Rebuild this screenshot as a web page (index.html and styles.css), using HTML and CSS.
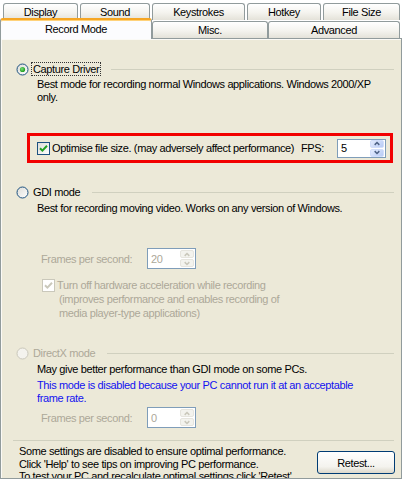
FILE: index.html
```html
<!DOCTYPE html>
<html>
<head>
<meta charset="utf-8">
<link rel="stylesheet" href="styles.css">
</head>
<body>
<svg class="defs" width="0" height="0">
  <defs>
    <linearGradient id="rg" x1="0" y1="0" x2="1" y2="1"><stop offset="0" stop-color="#DCDCD7"/><stop offset="1" stop-color="#FFFFFF"/></linearGradient>
    <radialGradient id="dot" cx="0.4" cy="0.4" r="0.6"><stop offset="0" stop-color="#7BE07B"/><stop offset="1" stop-color="#1C9A1C"/></radialGradient>
  </defs>
</svg>
<div class="win">
  <div class="tabrow row1">
    <div class="tab t-display">Display</div>
    <div class="tab t-sound">Sound</div>
    <div class="tab t-keys">Keystrokes</div>
    <div class="tab t-hotkey">Hotkey</div>
    <div class="tab t-fsize">File Size</div>
  </div>
  <div class="tabrow row2">
    <div class="tab sel t-record">Record Mode</div>
    <div class="tab t-misc">Misc.</div>
    <div class="tab t-adv">Advanced</div>
  </div>
  <div class="panel">
    <div class="ghead g1">
      <svg class="radio" width="13" height="13" viewBox="0 0 13 13"><circle cx="6.5" cy="6.5" r="5.5" fill="url(#rg)" stroke="#1C5180"/><circle cx="6.5" cy="6.5" r="2.6" fill="url(#dot)"/></svg>
      <span class="glabel focus">Capture Driver</span>
      <span class="gline"></span>
    </div>
    <div class="desc d1">Best mode for recording normal Windows applications. Windows 2000/XP<br>only.</div>

    <div class="redbox">
      <svg class="chk" width="13" height="13" viewBox="0 0 13 13"><rect x="0.5" y="0.5" width="12" height="12" fill="url(#rg)" stroke="#1C5180"/><path d="M3 6.2 L5.4 8.6 L10 3.8" fill="none" stroke="#21A121" stroke-width="2"/></svg>
      <span class="chklabel">Optimise file size. (may adversely affect performance)</span>
      <span class="fpslabel">FPS:</span>
      <div class="spin s-fps">
        <span class="val">5</span>
        <span class="btns">
          <span class="sb"><svg width="13" height="7" viewBox="0 0 13 7"><path d="M4 5 L6.5 2.5 L9 5" fill="none" stroke="#4D6185" stroke-width="1.6"/></svg></span>
          <span class="sb"><svg width="13" height="7" viewBox="0 0 13 7"><path d="M4 2 L6.5 4.5 L9 2" fill="none" stroke="#4D6185" stroke-width="1.6"/></svg></span>
        </span>
      </div>
    </div>

    <div class="ghead g2">
      <svg class="radio" width="13" height="13" viewBox="0 0 13 13"><circle cx="6.5" cy="6.5" r="5.5" fill="url(#rg)" stroke="#1C5180"/></svg>
      <span class="glabel">GDI mode</span>
      <span class="gline"></span>
    </div>
    <div class="desc d2">Best for recording moving video. Works on any version of Windows.</div>

    <div class="fpsrow r1">
      <span class="fpslbl">Frames per second:</span>
      <div class="spin dis">
        <span class="val">20</span>
        <span class="btns">
          <span class="sb"><svg width="13" height="7" viewBox="0 0 13 7"><path d="M4 5 L6.5 2.5 L9 5" fill="none" stroke="#C9C7BA" stroke-width="1.6"/></svg></span>
          <span class="sb"><svg width="13" height="7" viewBox="0 0 13 7"><path d="M4 2 L6.5 4.5 L9 2" fill="none" stroke="#C9C7BA" stroke-width="1.6"/></svg></span>
        </span>
      </div>
    </div>

    <div class="chkrow">
      <svg class="chk" width="13" height="13" viewBox="0 0 13 13"><rect x="0.5" y="0.5" width="12" height="12" fill="#FFFFFF" stroke="#CAC8BB"/><path d="M3 6.2 L5.4 8.6 L10 3.8" fill="none" stroke="#CAC8BB" stroke-width="2"/></svg>
      <div class="chktext">
        <div>Turn off hardware acceleration while recording</div>
        <div class="ind">(improves performance and enables recording of</div>
        <div class="ind">media player-type applications)</div>
      </div>
    </div>

    <div class="ghead g3 disabled">
      <svg class="radio" width="13" height="13" viewBox="0 0 13 13"><circle cx="6.5" cy="6.5" r="5.5" fill="#F4F3EE" stroke="#CAC8BB"/></svg>
      <span class="glabel">DirectX mode</span>
      <span class="gline"></span>
    </div>
    <div class="desc d3">May give better performance than GDI mode on some PCs.</div>
    <div class="desc blue">This mode is disabled because your PC cannot run it at an acceptable<br>frame rate.</div>

    <div class="fpsrow r2">
      <span class="fpslbl">Frames per second:</span>
      <div class="spin dis">
        <span class="val">0</span>
        <span class="btns">
          <span class="sb"><svg width="13" height="7" viewBox="0 0 13 7"><path d="M4 5 L6.5 2.5 L9 5" fill="none" stroke="#C9C7BA" stroke-width="1.6"/></svg></span>
          <span class="sb"><svg width="13" height="7" viewBox="0 0 13 7"><path d="M4 2 L6.5 4.5 L9 2" fill="none" stroke="#C9C7BA" stroke-width="1.6"/></svg></span>
        </span>
      </div>
    </div>

    <div class="sep"></div>

    <div class="bottom">
      <div class="btext">Some settings are disabled to ensure optimal performance.<br>Click 'Help' to see tips on improving PC performance.<br>To test your PC and recalculate optimal settings click 'Retest'.</div>
      <button class="retest">Retest...</button>
    </div>
  </div>
</div>
</body>
</html>
```
FILE: styles.css
```css
* { box-sizing: border-box; }
html, body { margin: 0; padding: 0; }
body {
  background: #FFFFFF;
  font-family: "Liberation Sans", Arial, sans-serif;
  font-size: 11px;
  letter-spacing: -0.37px;
  color: #000000;
  width: 404px;
  height: 480px;
  overflow: hidden;
}
.defs { position: absolute; }
.win { width: 404px; }

/* tabs */
.tabrow { display: flex; }
.row1 { margin-top: 3px; padding-left: 3px; gap: 2px; height: 17px; }
.row2 { margin-top: -2px; height: 20px; align-items: flex-end; position: relative; z-index: 1; }
.tab {
  height: 17px;
  border: 1px solid #919B9C;
  border-bottom: none;
  border-radius: 3px 3px 0 0;
  background: linear-gradient(#FFFFFF, #F4F3EE 55%, #E4E2D9);
  display: flex;
  align-items: center;
  justify-content: center;
}
.t-display { width: 75px; }
.t-sound { width: 70px; }
.t-keys { width: 93px; }
.t-hotkey { width: 74px; }
.t-fsize { width: 77px; }
.t-record { width: 152px; }
.t-misc { width: 116px; }
.t-adv { width: 132px; }
.row2 .tab { height: 17px; }
.row2 .tab.sel {
  height: 21px;
  margin-bottom: -1px;
  background: #FCFCFE;
  border-top: 2px solid #F6A623;
  box-shadow: inset 0 1px 0 #FFD27A;
  padding-bottom: 2px;
}

/* panel */
.panel {
  width: 402px;
  height: 441px;
  border: 1px solid #919B9C;
  background: #ECE9D8;
  box-shadow: inset 1px 1px 0 #FBFAF6;
  padding: 23px 7px 0 15px;
  overflow: hidden;
}

.ghead { display: flex; align-items: center; height: 14px; }
.radio { flex: none; display: block; }
.glabel {
  margin-left: 2px;
  padding: 0 1px;
  border: 1px solid transparent;
  line-height: 12px;
  white-space: nowrap;
}
.glabel.focus { border: 1px dotted #333333; }
.gline { flex: 1; border-top: 1px solid #D0D0BF; margin-left: 10px; height: 0; }
.disabled .glabel { color: #ACA899; }

.desc { margin-left: 21px; line-height: 13px; white-space: nowrap; }
.d1 { margin-top: 2px; }
.d2 { margin-top: 3px; }
.d3 { margin-top: 3px; }
.blue { color: #1212F0; margin-top: 3px; }

.redbox {
  margin-top: 29px;
  margin-left: 11px;
  margin-right: 1px;
  height: 30px;
  border: 3px solid #F20000;
  display: flex;
  align-items: center;
  padding: 0 4px 0 7px;
}
.chk { flex: none; display: block; }
.chklabel { margin-left: 2px; white-space: nowrap; }
.fpslabel { margin-left: auto; }

.spin {
  width: 49px;
  height: 20px;
  border: 1px solid #7F9DB9;
  background: #FFFFFF;
  display: flex;
  align-items: center;
  padding: 0 1px 0 3px;
  flex: none;
}
.s-fps { margin-left: 13px; height: 19px; }
.spin .val { flex: 1; }
.btns { display: flex; flex-direction: column; gap: 1px; }
.sb {
  width: 14px;
  height: 8px;
  border: 1px solid #D2DEFB;
  border-radius: 2px;
  background: linear-gradient(135deg, #E4ECFE, #B8CBF5);
  display: flex;
  align-items: center;
  justify-content: center;
}
.sb svg { display: block; }
.spin.dis { color: #ACA899; }
.spin.dis .sb { background: #F3F3EE; border-color: #E6E5DE; }

.fpsrow { display: flex; align-items: center; margin-left: 25px; color: #ACA899; }
.fpslbl { width: 106px; white-space: nowrap; }
.r1 { margin-top: 33px; }
.r1 .spin, .r2 .spin { height: 21px; }
.r2 { margin-top: 2px; }

.chkrow { display: flex; align-items: flex-start; margin-left: 26px; margin-top: 9px; color: #ACA899; }
.chkrow .chk { margin-top: 1px; }
.chktext { margin-left: 2px; line-height: 14px; white-space: nowrap; }
.chktext .ind { padding-left: 2px; }

.g2 { margin-top: 22px; }
.g3 { margin-top: 26px; }

.sep { margin-top: 12px; margin-left: -3px; border-top: 1px solid #D0D0BF; height: 0; }

.bottom { display: flex; margin-top: 4px; margin-right: -1px; }
.btext { margin-left: 3px; line-height: 12.7px; white-space: nowrap; flex: 1; }
.retest {
  margin-top: 6px;
  width: 78px;
  height: 23px;
  border: 1px solid #003C74;
  border-radius: 3px;
  background: linear-gradient(#FFFFFF, #F4F3EE 70%, #DCD8CB);
  font-family: inherit;
  font-size: 11px;
  letter-spacing: -0.37px;
  color: #000000;
  padding: 0;
  flex: none;
}
```
